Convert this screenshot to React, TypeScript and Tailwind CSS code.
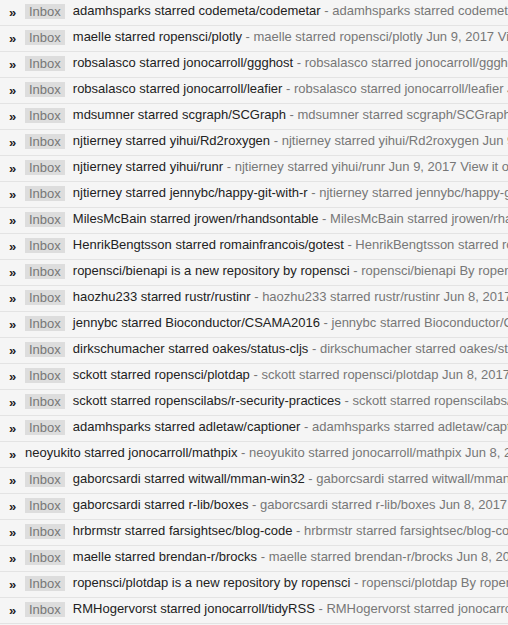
import React from "react";

type Row = { subject: string; snippet: string; inbox?: boolean };

const rows: Row[] = [
  { subject: "adamhsparks starred codemeta/codemetar", snippet: "adamhsparks starred codemeta/codemetar Jun 9, 2017 View it on GitHub" },
  { subject: "maelle starred ropensci/plotly", snippet: "maelle starred ropensci/plotly Jun 9, 2017 View it on GitHub" },
  { subject: "robsalasco starred jonocarroll/ggghost", snippet: "robsalasco starred jonocarroll/ggghost Jun 9, 2017 View it on GitHub" },
  { subject: "robsalasco starred jonocarroll/leafier", snippet: "robsalasco starred jonocarroll/leafier Jun 9, 2017 View it on GitHub" },
  { subject: "mdsumner starred scgraph/SCGraph", snippet: "mdsumner starred scgraph/SCGraph Jun 9, 2017 View it on GitHub" },
  { subject: "njtierney starred yihui/Rd2roxygen", snippet: "njtierney starred yihui/Rd2roxygen Jun 9, 2017 View it on GitHub" },
  { subject: "njtierney starred yihui/runr", snippet: "njtierney starred yihui/runr Jun 9, 2017 View it on GitHub" },
  { subject: "njtierney starred jennybc/happy-git-with-r", snippet: "njtierney starred jennybc/happy-git-with-r Jun 9, 2017 View it on GitHub" },
  { subject: "MilesMcBain starred jrowen/rhandsontable", snippet: "MilesMcBain starred jrowen/rhandsontable Jun 9, 2017 View it on GitHub" },
  { subject: "HenrikBengtsson starred romainfrancois/gotest", snippet: "HenrikBengtsson starred romainfrancois/gotest Jun 9, 2017 View it on GitHub" },
  { subject: "ropensci/bienapi is a new repository by ropensci", snippet: "ropensci/bienapi By ropensci Jun 8, 2017 View it on GitHub" },
  { subject: "haozhu233 starred rustr/rustinr", snippet: "haozhu233 starred rustr/rustinr Jun 8, 2017 View it on GitHub" },
  { subject: "jennybc starred Bioconductor/CSAMA2016", snippet: "jennybc starred Bioconductor/CSAMA2016 Jun 8, 2017 View it on GitHub" },
  { subject: "dirkschumacher starred oakes/status-cljs", snippet: "dirkschumacher starred oakes/status-cljs Jun 8, 2017 View it on GitHub" },
  { subject: "sckott starred ropensci/plotdap", snippet: "sckott starred ropensci/plotdap Jun 8, 2017 View it on GitHub" },
  { subject: "sckott starred ropenscilabs/r-security-practices", snippet: "sckott starred ropenscilabs/r-security-practices Jun 8, 2017" },
  { subject: "adamhsparks starred adletaw/captioner", snippet: "adamhsparks starred adletaw/captioner Jun 8, 2017 View it on GitHub" },
  { subject: "neoyukito starred jonocarroll/mathpix", snippet: "neoyukito starred jonocarroll/mathpix Jun 8, 2017 View it on GitHub", inbox: false },
  { subject: "gaborcsardi starred witwall/mman-win32", snippet: "gaborcsardi starred witwall/mman-win32 Jun 8, 2017 View it on GitHub" },
  { subject: "gaborcsardi starred r-lib/boxes", snippet: "gaborcsardi starred r-lib/boxes Jun 8, 2017 View it on GitHub" },
  { subject: "hrbrmstr starred farsightsec/blog-code", snippet: "hrbrmstr starred farsightsec/blog-code Jun 8, 2017 View it on GitHub" },
  { subject: "maelle starred brendan-r/brocks", snippet: "maelle starred brendan-r/brocks Jun 8, 2017 View it on GitHub" },
  { subject: "ropensci/plotdap is a new repository by ropensci", snippet: "ropensci/plotdap By ropensci Jun 8, 2017 View it on GitHub" },
  { subject: "RMHogervorst starred jonocarroll/tidyRSS", snippet: "RMHogervorst starred jonocarroll/tidyRSS Jun 8, 2017 View it on GitHub" },
];

export default function App() {
  return (
    <div
      className="w-[508px] h-[625px] overflow-hidden bg-[#f5f5f5] text-[13px]"
      style={{ fontFamily: '"Liberation Sans", Arial, sans-serif' }}
    >
      {rows.map((r, i) => (
        <div
          key={i}
          className="flex items-center h-[26px] border-b border-[#e3e3e3] whitespace-nowrap overflow-hidden pl-[9px]"
        >
          <span className="w-[16px] shrink-0 text-[#222] font-bold text-[13px] leading-none -mt-[1px]">»</span>
          {r.inbox !== false && (
            <span className="shrink-0 bg-[#dddddd] text-[#777] px-[4px] h-[15px] leading-[15px] mr-[8px] -mt-[3px]">
              Inbox
            </span>
          )}
          <span className="text-[#222] shrink-0 -mt-[3px]">{r.subject}</span>
          <span className="text-[#777] shrink-0 -mt-[3px]">&nbsp;- {r.snippet}</span>
        </div>
      ))}
    </div>
  );
}
